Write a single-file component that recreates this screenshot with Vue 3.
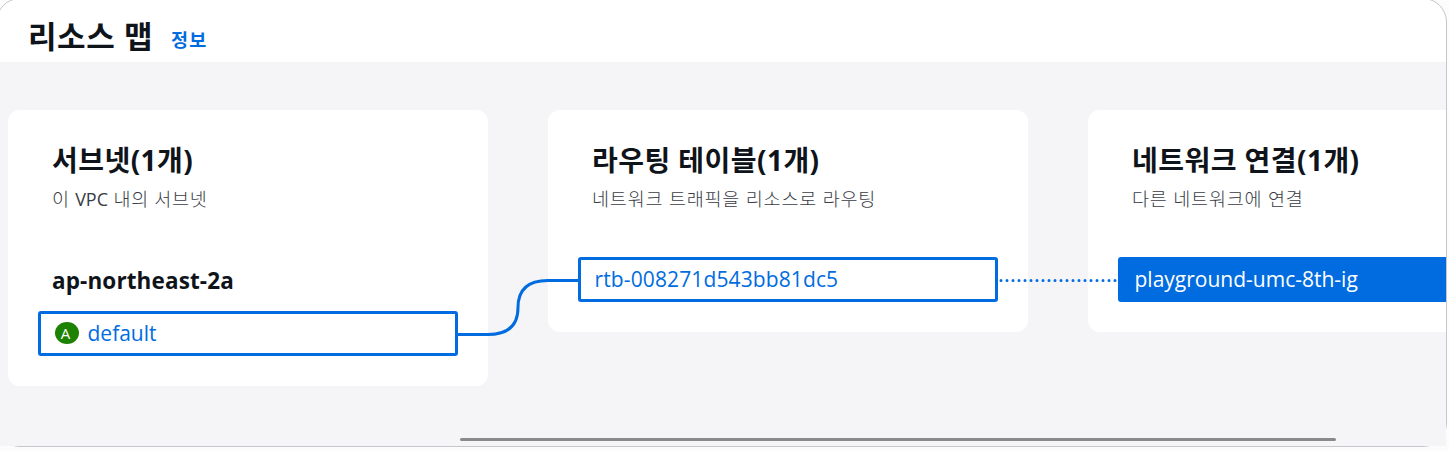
<script setup>
const columns = [
  {
    id: 'subnets',
    title: '서브넷(1개)',
    description: ['이 ', 'VPC', ' 내의 서브넷'],
    group: 'ap-northeast-2a',
    node: 'default',
    badge: 'A',
  },
  {
    id: 'routes',
    title: '라우팅 테이블(1개)',
    description: ['네트워크 트래픽을 리소스로 라우팅'],
    node: 'rtb-008271d543bb81dc5',
  },
  {
    id: 'connections',
    title: '네트워크 연결(1개)',
    description: ['다른 네트워크에 연결'],
    node: 'playground-umc-8th-ig',
    selected: true,
  },
]
</script>

<template>
  <main class="page">
    <section class="panel">
      <header class="header">
        <h1 class="heading">리소스 맵</h1>
        <a class="info">정보</a>
      </header>
      <div class="map">
        <div class="columns">
          <article v-for="c in columns" :key="c.id" class="card" :class="c.id">
            <h2 class="title">{{ c.title }}</h2>
            <p class="description"><span v-for="(part, i) in c.description" :key="i" :class="{ latin: i === 1 }">{{ part }}</span></p>
            <h3 v-if="c.group" class="group">{{ c.group }}</h3>
            <div class="node" :class="[c.id + '-node', { selected: c.selected }]">
              <span v-if="c.badge" class="badge"><span class="letter">{{ c.badge }}</span></span>
              <span class="label">{{ c.node }}</span>
            </div>
          </article>
        </div>
        <svg class="links" width="1446" height="384" viewBox="0 62 1446 384" fill="none" stroke="#006ce0" stroke-width="3">
          <path d="M457 334.5H488Q518 334.5 518 307.5Q518 280.5 548 280.5H579" />
          <path d="M1001 280.5H1118" stroke-dasharray="0 6" stroke-linecap="round" />
        </svg>
        <div class="scrollbar"></div>
      </div>
    </section>
  </main>
</template>

<style>
body {
  margin: 0;
  overflow: hidden;
  background: #fcfcfd;
}
</style>

<style scoped>
.page {
  width: 1449px;
  height: 451px;
  overflow: hidden;
  font-family: "Open Sans", "Noto Sans CJK KR", sans-serif;
  color: #0f141a;
}
.panel {
  box-sizing: border-box;
  width: 1451px;
  height: 449px;
  margin: -2px 0 0 -4px;
  padding: 1px 0 0 3px;
  border: 1px solid #c6c6cd;
  border-radius: 24px;
  background: #fff;
}
.header {
  display: flex;
  height: 62px;
}
.heading {
  margin: 14px 0 0 28px;
  width: 143px;
  font-size: 31px;
  line-height: 44px;
  font-weight: 700;
  letter-spacing: 0.6px;
  white-space: nowrap;
}
.info {
  margin-top: 26px;
  font-size: 18.5px;
  line-height: 28px;
  font-weight: 700;
  letter-spacing: 1.3px;
  color: #006ce0;
}
.map {
  position: relative;
  width: 1446px;
  height: 384px;
  overflow: hidden;
  background: #f5f5f8;
}
.columns {
  display: flex;
  align-items: flex-start;
  gap: 60px;
  padding: 48px 0 0 8px;
}
.card {
  box-sizing: border-box;
  flex: 0 0 480px;
  height: 222px;
  padding: 30px;
  border-radius: 12px;
  background: #fff;
}
.card.subnets {
  height: 276px;
}
.title,
.description,
.group {
  margin: 0 0 0 14px;
  white-space: nowrap;
}
.title {
  font-size: 28px;
  line-height: 40px;
  font-weight: 700;
  letter-spacing: 0.45px;
}
.description {
  margin-top: 5px;
  height: 72px;
  font-size: 18.5px;
  line-height: 28px;
  font-weight: 300;
  letter-spacing: 0.8px;
  white-space: pre;
  color: #383c45;
}
.latin {
  font-size: 18px;
  font-weight: 400;
  letter-spacing: 0;
}
.subnets .description {
  height: 80px;
  letter-spacing: 0.65px;
}
.subnets .latin {
  letter-spacing: 0;
}
.group {
  height: 46px;
  font-size: 22.5px;
  line-height: 32px;
  letter-spacing: 0.12px;
}
.node {
  box-sizing: border-box;
  display: flex;
  align-items: center;
  width: 420px;
  height: 45px;
  padding: 0 13.5px 2px;
  border: 3px solid #006ce0;
  border-radius: 3px;
  color: #006ce0;
  font-size: 21px;
  line-height: 30px;
  white-space: nowrap;
}
.routes-node {
  letter-spacing: 0.12px;
}
.node.selected {
  background: #006ce0;
  color: #fff;
}
.badge {
  display: flex;
  align-items: center;
  justify-content: center;
  width: 24px;
  height: 22px;
  margin-right: 9px;
  border-radius: 50%;
  background: #1d8102;
  color: #fff;
  font-size: 15px;
  line-height: 22px;
}
.letter {
  margin: 0 2px 0 0;
}
.links {
  position: absolute;
  inset: 0;
}
.scrollbar {
  position: absolute;
  left: 460px;
  bottom: 5px;
  width: 876px;
  height: 3px;
  border-radius: 2px;
  background: #8a8a8a;
}
</style>
